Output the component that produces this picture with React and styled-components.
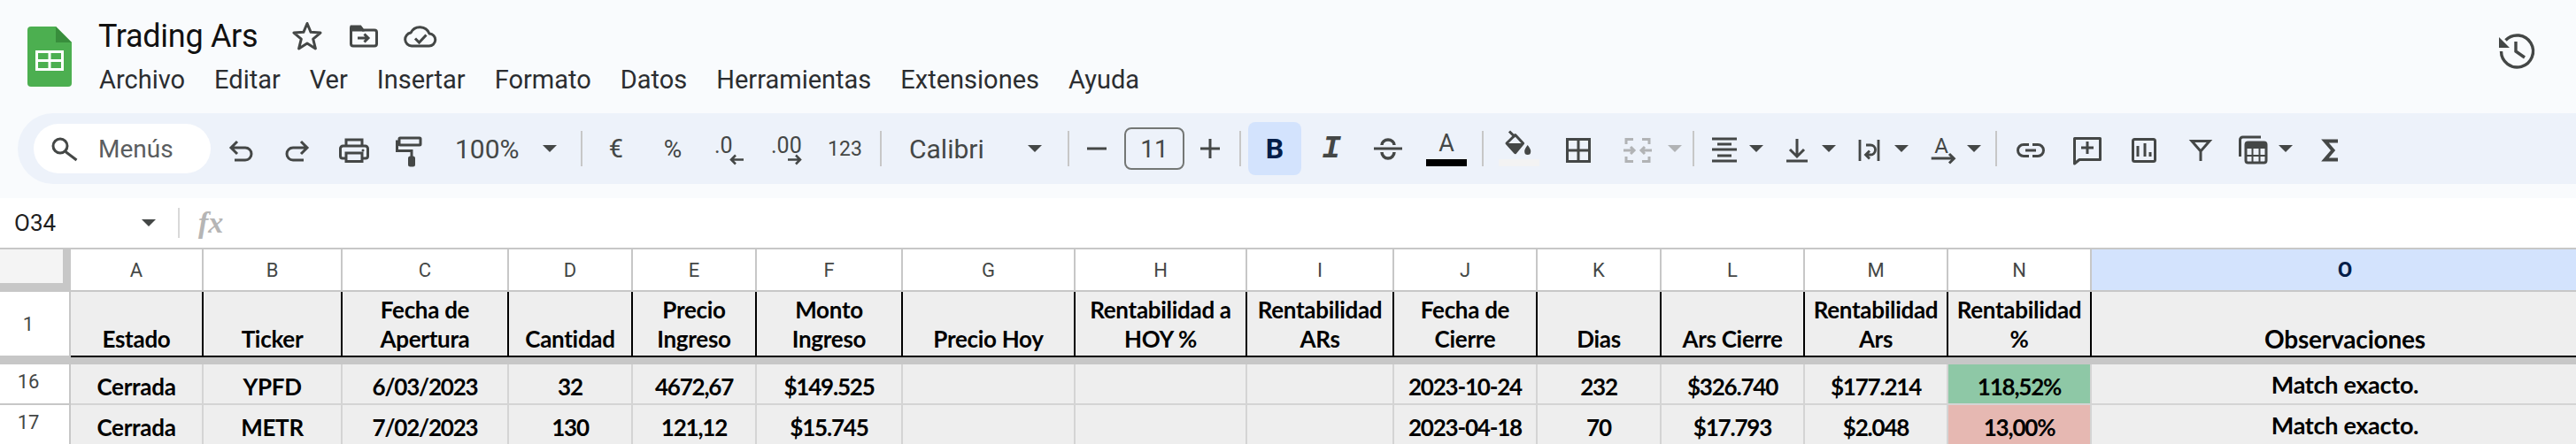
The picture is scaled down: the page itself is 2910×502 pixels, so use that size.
import React from "react";
import styled, { createGlobalStyle } from "styled-components";

const INK = "#444746";
const COLS = "80px 150px 157px 188px 140px 140px 165px 195px 194px 166px 162px 140px 162px 162px 162px 574px";

const Global = createGlobalStyle`
  html, body { margin: 0; padding: 0; height: 502px; overflow: hidden; background: #f9fbfd; }
  body { font-family: Roboto, "Liberation Sans", sans-serif; }
  #root { width: 2910px; height: 502px; overflow: hidden; }
`;

const Page = styled.div`width: 2910px; display: flex; flex-direction: column;`;

const Header = styled.header`
  height: 128px; box-sizing: border-box; padding: 20px 42px 0 31px; display: flex; align-items: flex-start;
`;
const Logo = styled.svg`width: 50px; height: 68px; margin-top: 10px; flex: none;`;
const DocInfo = styled.div`margin-left: 30px; display: flex; flex-direction: column; flex: none;`;
const TitleRow = styled.div`height: 42px; display: flex; align-items: center;`;
const Title = styled.div`font-size: 36px; color: #111; width: 219px; letter-spacing: -0.3px; line-height: 42px;`;
const TitleIcon = styled.svg`flex: none; margin-left: ${p => p.$ml}px; fill: none; stroke: ${INK}; stroke-width: 3;`;
const MenuRow = styled.nav`height: 40px; margin-top: 8px; display: flex; align-items: center; gap: 33px; padding-left: 1px;`;
const MenuItem = styled.span`font-size: 29px; color: #2b2d30; line-height: 40px; flex: none;`;
const History = styled.svg`width: 48px; height: 48px; margin: 14px 0 0 auto; fill: none; stroke: ${INK}; stroke-width: 3.4;`;

const Toolbar = styled.div`
  height: 80px; margin-left: 20px; padding-left: 18px; background: #edf2fa; border-radius: 40px 0 0 40px;
  display: flex; align-items: center;
`;
const SearchPill = styled.div`
  width: 200px; height: 56px; box-sizing: border-box; padding-left: 20px; background: #fff; border-radius: 28px;
  display: flex; align-items: center; gap: 21px; flex: none; font-size: 28px; color: #5a5d60;
`;
const Tool = styled.div`
  width: ${p => p.$w}px; height: 60px; flex: none; display: flex; align-items: center; justify-content: center;
  color: ${INK}; font-size: ${p => p.$fs || 26}px;
`;
const Drop = styled.div`
  width: ${p => p.$w}px; height: 60px; flex: none; box-sizing: border-box; padding-left: ${p => p.$pl}px;
  display: flex; align-items: center; color: ${INK}; font-size: 30px;
`;
const Caret = styled.span`
  flex: none; margin-left: ${p => p.$gap}px; width: 0; height: 0;
  border-left: 8px solid transparent; border-right: 8px solid transparent;
  border-top: 8px solid ${p => p.$off ? "#b1b3b5" : INK};
`;
const Sep = styled.div`width: 2px; height: 40px; flex: none; margin-left: ${p => p.$ml || 0}px; background: #c7c7c7;`;
const Icon = styled.svg`width: 48px; height: 48px; flex: none; fill: none; stroke: ${p => p.$off ? "#b1b3b5" : INK}; stroke-width: 3;`;
const SearchIcon = styled.svg`width: 32px; height: 32px; flex: none; fill: none; stroke: ${INK}; stroke-width: 3;`;
const SizeBox = styled.div`
  width: 68px; height: 48px; box-sizing: border-box; flex: none; border: 2px solid #747775; border-radius: 8px;
  display: flex; align-items: center; justify-content: center; font-size: 28px; color: ${INK};
`;
const BoldBtn = styled.div`
  width: 60px; height: 60px; margin-left: 8px; flex: none; border-radius: 8px; background: #d3e3fd; color: #041e49;
  display: flex; align-items: center; justify-content: center; font-size: 32px; font-weight: 700;
`;
const ItalicGlyph = styled.span`font-family: "Liberation Mono", monospace; font-weight: 700; font-style: italic; font-size: 36px; color: ${INK};`;
const ColorStack = styled.div`display: flex; flex-direction: column; align-items: center; width: 46px; height: 48px;`;
const ColorLetter = styled.span`font-size: 27px; line-height: 36px; height: 36px; color: ${INK};`;
const ColorBar = styled.span`display: block; width: 46px; height: 8px; background: #000;`;

const FormulaBar = styled.div`
  height: 56px; margin-top: 16px; background: #fff; display: flex; align-items: center; padding-left: 16px;
`;
const CellRef = styled.div`font-size: 26px; color: #1f1f1f; width: 144px; flex: none;`;
const FxSep = styled.div`width: 2px; height: 34px; margin-left: 25px; background: #d9d9d9; flex: none;`;
const Fx = styled.div`
  margin-left: 21px; font-family: "Liberation Serif", serif; font-style: italic; font-weight: 700; font-size: 34px; color: #b5b5b5;
`;

const Sheet = styled.div`border-top: 2px solid #c7c7c7; background: #fff;`;
const Row = styled.div`display: grid; grid-template-columns: ${COLS}; height: ${p => p.$h}px;`;
const Corner = styled.div`background: #f4f4f4; border-right: 9px solid #c7c7c7; border-bottom: 10px solid #c7c7c7;`;
const ColLabel = styled.div`
  display: flex; align-items: center; justify-content: center; box-sizing: border-box;
  border-right: 2px solid #c7c7c7; border-bottom: 2px solid #c7c7c7;
  font-size: ${p => p.$active ? 24 : 22}px; color: ${p => p.$active ? "#041e49" : INK}; font-weight: ${p => p.$active ? 700 : 400};
  background: ${p => p.$active ? "#d3e3fd" : "#fff"};
`;
const RowNum = styled.div`
  display: flex; align-items: center; justify-content: center; box-sizing: border-box; padding-right: 14px;
  background: #fff; border-right: 2px solid #c7c7c7; font-size: 22px; color: ${INK};
  border-bottom: 2px solid #c7c7c7; padding-bottom: ${p => p.$pb || 0}px;
`;
const HeadCell = styled.div`
  box-sizing: border-box; background: #eee; border-right: 2px solid #000; border-bottom: 2px solid #000;
  display: flex; flex-direction: column; justify-content: flex-end; align-items: center; text-align: center;
  font-family: Lato, "Open Sans", sans-serif; font-weight: 700; color: #000;
  font-size: ${p => p.$big ? 28 : 26}px; letter-spacing: ${p => p.$big ? -0.2 : -0.3}px;
  line-height: 33px; padding-bottom: 2px; white-space: nowrap;
`;
const DataCell = styled.div`
  box-sizing: border-box; background: ${p => p.$bg || "#eee"}; border-right: 2px solid #d4d4d4; border-bottom: 2px solid #d4d4d4;
  display: flex; align-items: center; justify-content: center; white-space: nowrap; padding-top: ${p => p.$big ? 0 : 5}px;
  font-family: Lato, "Open Sans", sans-serif; font-weight: 700; color: #000;
  font-size: ${p => p.$big ? 27 : 26}px; letter-spacing: ${p => p.$num ? -1.2 : -0.3}px;
`;
const Band = styled.div`height: 8px; background: #c7c7c7;`;

const menus = ["Archivo", "Editar", "Ver", "Insertar", "Formato", "Datos", "Herramientas", "Extensiones", "Ayuda"];
const letters = "ABCDEFGHIJKLMNO".split("");
const heads = [
  ["Estado"], ["Ticker"], ["Fecha de", "Apertura"], ["Cantidad"], ["Precio", "Ingreso"], ["Monto", "Ingreso"],
  ["Precio Hoy"], ["Rentabilidad a", "HOY %"], ["Rentabilidad", "ARs"], ["Fecha de", "Cierre"], ["Dias"],
  ["Ars Cierre"], ["Rentabilidad", "Ars"], ["Rentabilidad", "%"], ["Observaciones"],
];
const rows = [
  { n: 16, bg: "#8ec8a6", cells: ["Cerrada", "YPFD", "6/03/2023", "32", "4672,67", "$149.525", "", "", "", "2023-10-24", "232", "$326.740", "$177.214", "118,52%", "Match exacto."] },
  { n: 17, bg: "#e6b8b2", cells: ["Cerrada", "METR", "7/02/2023", "130", "121,12", "$15.745", "", "", "", "2023-04-18", "70", "$17.793", "$2.048", "13,00%", "Match exacto."] },
];

const GlyphIcon = ({ text, size, x, y, anchor = "start", children }) => (
  <Icon viewBox="0 0 48 48">
    <text x={x} y={y} fontFamily="Roboto, sans-serif" fontSize={size} fill={INK} stroke="none" textAnchor={anchor}>{text}</text>
    {children}
  </Icon>
);

export default function App() {
  return (
    <Page>
      <Global />
      <Header>
        <Logo viewBox="0 0 50 68">
          <path d="M4 0H32L50 18V64a4 4 0 0 1-4 4H4a4 4 0 0 1-4-4V4a4 4 0 0 1 4-4z" fill="#4caf50" />
          <path d="M32 0L50 18H32z" fill="#388e3c" />
          <path d="M9 27H41V50H9z" fill="#fff" />
          <path d="M12 30H23.5V37H12zM26.5 30H38V37H26.5zM12 40H23.5V47H12zM26.5 40H38V47H26.5z" fill="#4caf50" />
        </Logo>
        <DocInfo>
          <TitleRow>
            <Title>Trading Ars</Title>
            <TitleIcon width="34" height="34" viewBox="0 0 34 34" $ml="0">
              <path strokeLinejoin="round" d="M17 2.5L21.1 12.3L32 13.1L23.7 20.2L26.4 30.9L17 25L7.6 30.9L10.3 20.2L2 13.1L12.9 12.3Z" />
            </TitleIcon>
            <TitleIcon width="32" height="26" viewBox="0 0 32 26" $ml="31">
              <path d="M2 2H12L15 6H28a2.5 2.5 0 0 1 2.5 2.5V21.500a2.500 2.500 0 0 1-2.500 2.500H4A2.500 2.500 0 0 1 1.500 21.500V4z" />
              <path d="M2 3H12L14 6H2z" fill={INK} />
              <path d="M9 15H21M16.500 10.500L21 15L16.500 19.500" />
            </TitleIcon>
            <TitleIcon width="38" height="26" viewBox="0 0 38 26" $ml="29">
              <path strokeLinejoin="round" d="M9 24a7.500 7.500 0 0 1-1-14.900A11.500 11.500 0 0 1 29 10a7 7 0 0 1-.5 14z" />
              <path d="M13 15.500L17.500 20L25.500 11.500" />
            </TitleIcon>
          </TitleRow>
          <MenuRow>{menus.map(m => <MenuItem key={m}>{m}</MenuItem>)}</MenuRow>
        </DocInfo>
        <History viewBox="0 0 48 48">
          <path d="M5.500 24A18 18 0 1 0 10.500 11.500" />
          <path d="M3 8V20H15z" fill={INK} stroke="none" />
          <path d="M22 13V24L32 31" />
        </History>
      </Header>

      <Toolbar>
        <SearchPill>
          <SearchIcon viewBox="0 0 32 32"><circle cx="10" cy="13" r="8" /><path d="M16 19.500L28.500 29" /></SearchIcon>
          <span>Menús</span>
        </SearchPill>
        <Tool $w={68}><Icon viewBox="0 0 48 48"><path d="M20 16L13 23L20 30M13 23H29a7 7 0 0 1 0 14H17" /></Icon></Tool>
        <Tool $w={60}><Icon viewBox="0 0 48 48"><path d="M28 16L35 23L28 30M35 23H19a7 7 0 0 0 0 14H31" /></Icon></Tool>
        <Tool $w={68}><Icon viewBox="0 0 48 48">
          <path d="M15 21V14H33V21" /><path d="M15 35H11a2.500 2.500 0 0 1-2.500-2.500V24a3 3 0 0 1 3-3H36.500a3 3 0 0 1 3 3V32.500A2.500 2.500 0 0 1 37 35H33" />
          <path d="M15 29H33V38.500H15z" /><circle cx="34" cy="26" r="1.500" fill={INK} stroke="none" />
        </Icon></Tool>
        <Tool $w={56}><Icon viewBox="0 0 48 48">
          <rect x="13" y="12" width="24" height="8" rx="1" /><path d="M13 16H10.500V26.500H27V34" /><rect x="24.500" y="34" width="5" height="9" rx="1" fill={INK} />
        </Icon></Tool>
        <Drop $w={166} $pl={24}><span>100%</span><Caret $gap={26} /></Drop>
        <Sep />
        <Tool $w={76} $fs={29}>€</Tool>
        <Tool $w={52} $fs={28}>%</Tool>
        <Tool $w={75}><GlyphIcon text=".0" size={25} x={7} y={29}><path strokeWidth="2.500" d="M40 36.500H26M31 31.500L26 36.500L31 41.500" /></GlyphIcon></Tool>
        <Tool $w={54}><GlyphIcon text=".00" size={25} x={7} y={29}><path strokeWidth="2.500" d="M26 36.500H40M35 31.500L40 36.500L35 41.500" /></GlyphIcon></Tool>
        <Tool $w={79} $fs={23}>123</Tool>
        <Sep />
        <Drop $w={210} $pl={31}><span>Calibri</span><Caret $gap={49} /></Drop>
        <Sep />
        <Tool $w={62}><Icon viewBox="0 0 48 48"><path d="M13 24H35" /></Icon></Tool>
        <SizeBox>11</SizeBox>
        <Tool $w={58}><Icon viewBox="0 0 48 48"><path d="M13 24H35M24 13V35" /></Icon></Tool>
        <Sep $ml={4} />
        <BoldBtn>B</BoldBtn>
        <Tool $w={68}><ItalicGlyph>I</ItalicGlyph></Tool>
        <Tool $w={60}><Icon viewBox="0 0 48 48">
          <path d="M8 24H40" /><path d="M17 20a7 6 0 0 1 14 0M17 28a7 7 0 0 0 14 0" strokeWidth="3.500" />
        </Icon></Tool>
        <Tool $w={72}><ColorStack><ColorLetter>A</ColorLetter><ColorBar /></ColorStack></Tool>
        <Sep $ml={4} />
        <Tool $w={80}><Icon viewBox="0 0 48 48">
          <rect x="1" y="36" width="46" height="8" fill="#f3f3f3" stroke="none" />
          <path d="M13 4.500L19.500 11M10 18L19.700 8.500L28.600 18L19.700 28.700Z" strokeLinejoin="round" />
          <path d="M10 18H28.600L19.700 28.700Z" fill={INK} stroke="none" />
          <path d="M33.700 20q4 5 3.500 7.500a3.500 3.500 0 0 1-7 0q-.5-2.500 3.500-7.500z" fill={INK} stroke="none" />
        </Icon></Tool>
        <Tool $w={54}><Icon viewBox="0 0 48 48"><path d="M11.500 13.500H36.500V38.500H11.500ZM24 13.500V38.500M11.500 26H36.500" /></Icon></Tool>
        <Drop $w={102} $pl={16}>
          <Icon $off viewBox="0 0 48 48"><path d="M19 13.500H11V19M29 13.500H37V19M19 38.500H11V33M29 38.500H37V33M8 26H20M16 22L20 26L16 30M40 26H28M32 22L28 26L32 30" /></Icon>
          <Caret $off $gap={10} />
        </Drop>
        <Sep />
        <Drop $w={82} $pl={10}>
          <Icon viewBox="0 0 48 48"><path d="M10 13H38M16 19H32M10 25H38M16 32H32M10 38H38" /></Icon><Caret $gap={4} />
        </Drop>
        <Drop $w={82} $pl={10}>
          <Icon viewBox="0 0 48 48"><path d="M12 38H36M24 13V32M16 25L24 33L32 25" /></Icon><Caret $gap={4} />
        </Drop>
        <Drop $w={82} $pl={10}>
          <Icon viewBox="0 0 48 48"><path d="M13 14V38M34 14V38M20 20H25a5.500 5.500 0 0 1 0 11H20M24 26.500L19.500 31L24 35.500" strokeWidth="2.800" /></Icon><Caret $gap={4} />
        </Drop>
        <Drop $w={94} $pl={11}>
          <GlyphIcon text="A" size={24} x={22} y={29} anchor="middle"><path d="M10.700 35H36M31 30L36.300 35.300L31 40.500" /></GlyphIcon><Caret $gap={3} />
        </Drop>
        <Sep />
        <Tool $w={76}><Icon viewBox="0 0 48 48"><path d="M22 19.500H16a6.500 6.500 0 0 0 0 13H22M26 19.500H32a6.500 6.500 0 0 1 0 13H26M18 26H30" /></Icon></Tool>
        <Tool $w={52}><Icon viewBox="0 0 48 48"><path strokeLinejoin="round" d="M9.500 12.500H38.500V36.500H15L9.500 41ZM24 16V30M17 23H31" /></Icon></Tool>
        <Tool $w={76}><Icon viewBox="0 0 48 48"><rect x="11.500" y="13.500" width="25" height="25" rx="2" /><path d="M17 21V33M25 18V33M31 28V33" /></Icon></Tool>
        <Tool $w={52}><Icon viewBox="0 0 48 48"><path d="M14 15.500H34L24 27ZM24 27V38" /></Icon></Tool>
        <Drop $w={88} $pl={9}>
          <Icon viewBox="0 0 48 48">
            <path d="M9.500 33V14a3 3 0 0 1 3-3H33" /><rect x="16" y="17" width="23" height="23" rx="2.500" />
            <rect x="16" y="17" width="23" height="7" fill={INK} stroke="none" />
            <path strokeWidth="2" d="M23.500 24V40M31.500 24V40M16 32H39" />
          </Icon><Caret $gap={5} />
        </Drop>
        <Tool $w={66}><Icon viewBox="0 0 48 48"><path strokeWidth="4" d="M32 15.500H17.500L26.500 26L17.500 36.500H32" /></Icon></Tool>
      </Toolbar>

      <FormulaBar>
        <CellRef>O34</CellRef>
        <Caret $gap={0} />
        <FxSep />
        <Fx>fx</Fx>
      </FormulaBar>

      <Sheet>
        <Row $h={48}>
          <Corner />
          {letters.map(l => <ColLabel key={l} $active={l === "O"}>{l}</ColLabel>)}
        </Row>
        <Row $h={74}>
          <RowNum>1</RowNum>
          {heads.map((h, i) => (
            <HeadCell key={i} $big={i === 14}>{h.map(t => <span key={t}>{t}</span>)}</HeadCell>
          ))}
        </Row>
        <Band />
        {rows.map(r => (
          <Row key={r.n} $h={46}>
            <RowNum $pb={6}>{r.n}</RowNum>
            {r.cells.map((c, i) => (
              <DataCell key={i} $big={i === 14} $num={/^[\d$]/.test(c)} $bg={i === 13 ? r.bg : undefined}>{c}</DataCell>
            ))}
          </Row>
        ))}
      </Sheet>
    </Page>
  );
}
